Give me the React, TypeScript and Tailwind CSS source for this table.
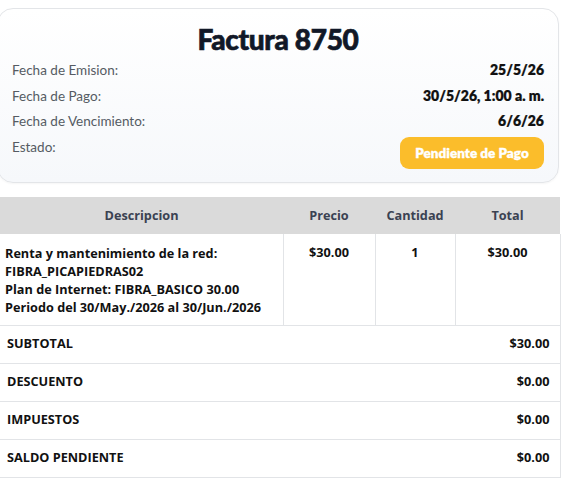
export default function App() {
  const rows = [
    { label: "Fecha de Emision:", value: "25/5/26" },
    { label: "Fecha de Pago:", value: "30/5/26, 1:00 a. m." },
    { label: "Fecha de Vencimiento:", value: "6/6/26" },
  ];

  const totals = [
    { label: "SUBTOTAL", value: "$30.00" },
    { label: "DESCUENTO", value: "$0.00" },
    { label: "IMPUESTOS", value: "$0.00" },
    { label: "SALDO PENDIENTE", value: "$0.00" },
  ];

  return (
    <div className="w-[565px] h-[482px] bg-white overflow-hidden font-['Open_Sans',sans-serif]">
      {/* Invoice header card */}
      <div className="mt-2 ml-[-3px] w-[562px] rounded-2xl border border-[#e3e5e8] bg-gradient-to-b from-white to-[#f6f8fb] pl-[14px] pr-[14px] pt-3 pb-[13px] shadow-[0_1px_2px_rgba(0,0,0,0.04)]">
        <h1 className="text-center text-[28px] leading-9 font-black text-[#111827] font-['Lato',sans-serif] tracking-[-0.3px] [-webkit-text-stroke:0.7px_#111827]">
          Factura 8750
        </h1>
        <div className="flex flex-col gap-[5.5px] text-[13px] leading-5 mt-[3px]">
          {rows.map((r) => (
            <div key={r.label} className="flex justify-between">
              <span className="text-[#555b63] font-['Lato',sans-serif] text-[13.5px]">{r.label}</span>
              <span className="font-extrabold text-[#111] font-['Lato',sans-serif] text-[14px] [-webkit-text-stroke:0.2px_#111]">{r.value}</span>
            </div>
          ))}
          <div className="flex justify-between items-start">
            <span className="text-[#555b63] font-['Lato',sans-serif] text-[13.5px]">Estado:</span>
            <span className="h-8 w-[144px] flex items-center justify-center rounded-[9px] bg-[#fbbd2b] text-white font-extrabold text-[13.5px] font-['Lato',sans-serif] [-webkit-text-stroke:0.3px_#fff]">
              Pendiente de Pago
            </span>
          </div>
        </div>
      </div>

      {/* Items table */}
      <table className="mt-[14px] w-[560px] border-collapse table-fixed text-[12.7px] font-bold text-[#111]">
        <colgroup>
          <col className="w-[283px]" />
          <col className="w-[92px]" />
          <col className="w-[80px]" />
          <col className="w-[105px]" />
        </colgroup>
        <thead>
          <tr className="h-[37px] bg-[#dadada] text-[#3a4252]">
            <th className="font-bold p-0 leading-[18px]">Descripcion</th>
            <th className="font-bold p-0 leading-[18px]">Precio</th>
            <th className="font-bold p-0 leading-[18px]">Cantidad</th>
            <th className="font-bold p-0 leading-[18px]">Total</th>
          </tr>
        </thead>
        <tbody>
          <tr className="border-b border-[#e2e4e7] align-top">
            <td className="pl-[5px] pt-[10px] pb-[9px] leading-[18px] border-r border-[#e2e4e7]">
              Renta y mantenimiento de la red:
              <br />
              FIBRA_PICAPIEDRAS02
              <br />
              Plan de Internet: FIBRA_BASICO 30.00
              <br />
              Periodo del 30/May./2026 al 30/Jun./2026
            </td>
            <td className="text-center pt-[9px] leading-[18px] border-r border-[#e2e4e7]">$30.00</td>
            <td className="text-center pt-[9px] leading-[18px] border-r border-[#e2e4e7]">1</td>
            <td className="text-center pt-[9px] leading-[18px] border-r border-[#e2e4e7]">$30.00</td>
          </tr>
          {totals.map((t) => (
            <tr key={t.label} className="h-[38px] border-b border-[#e2e4e7]">
              <td colSpan={3} className="pl-[7px]">{t.label}</td>
              <td className="text-right pr-[10px] border-r border-[#e2e4e7]">{t.value}</td>
            </tr>
          ))}
        </tbody>
      </table>
    </div>
  );
}
